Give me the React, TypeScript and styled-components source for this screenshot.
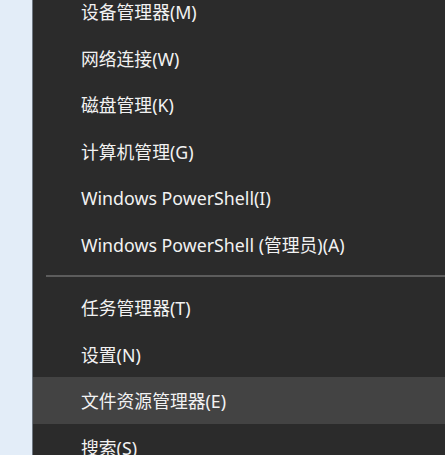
import React from "react";
import styled, { createGlobalStyle } from "styled-components";

const GlobalStyle = createGlobalStyle`
  html, body {
    margin: 0;
    padding: 0;
    background: #e3edf8;
    overflow: hidden;
  }
`;

const Page = styled.div`
  display: flex;
  width: 445px;
  height: 455px;
  overflow: hidden;
`;

const Desktop = styled.div`
  width: 32px;
  flex-shrink: 0;
  background: #e3edf8;
  border-right: 1px solid #6f7882;
`;

const Menu = styled.div`
  flex: 1;
  background: #2b2b2b;
  display: flex;
  flex-direction: column;
  overflow: hidden;
`;

const List = styled.div`
  display: flex;
  flex-direction: column;
  margin-top: -12.5px;
`;

const Item = styled.div<{ $active?: boolean }>`
  height: 46.7px;
  flex-shrink: 0;
  display: flex;
  align-items: center;
  padding-left: 48px;
  background: ${(p) => (p.$active ? "#434343" : "transparent")};
  color: #f2f2f2;
  font-family: "Noto Sans", "Noto Sans CJK SC", sans-serif;
  font-size: 17.8px;
  white-space: nowrap;
`;

const Separator = styled.div`
  height: 2px;
  flex-shrink: 0;
  margin: 7px 0 7px 13px;
  background: #5c5c5c;
`;

const upper = [
  "设备管理器(M)",
  "网络连接(W)",
  "磁盘管理(K)",
  "计算机管理(G)",
  "Windows PowerShell(I)",
  "Windows PowerShell (管理员)(A)",
];

const lower = ["任务管理器(T)", "设置(N)", "文件资源管理器(E)", "搜索(S)"];

const App: React.FC = () => (
  <>
    <GlobalStyle />
    <Page>
      <Desktop />
      <Menu>
        <List>
          {upper.map((t) => (
            <Item key={t}>{t}</Item>
          ))}
          <Separator />
          {lower.map((t) => (
            <Item key={t} $active={t === "文件资源管理器(E)"}>
              {t}
            </Item>
          ))}
        </List>
      </Menu>
    </Page>
  </>
);

export default App;
